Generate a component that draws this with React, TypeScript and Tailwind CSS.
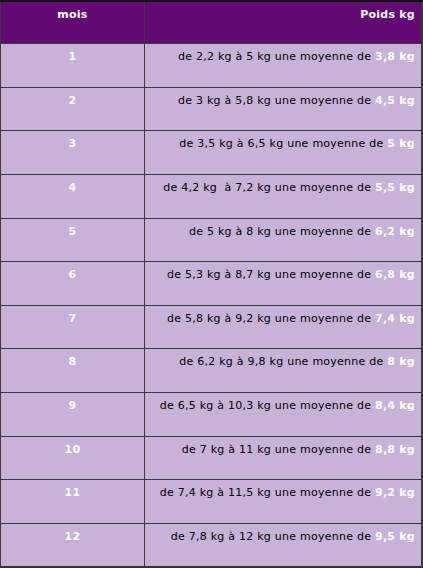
import React from "react";

const rows: { m: string; text: string; avg: string; h: string }[] = [
  { m: "1", text: "de 2,2 kg à 5 kg une moyenne de ", avg: "3,8 kg", h: "h-[44px]" },
  { m: "2", text: "de 3 kg à 5,8 kg une moyenne de ", avg: "4,5 kg", h: "h-[43px]" },
  { m: "3", text: "de 3,5 kg à 6,5 kg une moyenne de ", avg: "5 kg", h: "h-[44px]" },
  { m: "4", text: "de 4,2 kg \u00a0à 7,2 kg une moyenne de ", avg: "5,5 kg", h: "h-[44px]" },
  { m: "5", text: "de 5 kg à 8 kg une moyenne de ", avg: "6,2 kg", h: "h-[43px]" },
  { m: "6", text: "de 5,3 kg à 8,7 kg une moyenne de ", avg: "6,8 kg", h: "h-[44px]" },
  { m: "7", text: "de 5,8 kg à 9,2 kg une moyenne de ", avg: "7,4 kg", h: "h-[43px]" },
  { m: "8", text: "de 6,2 kg à 9,8 kg une moyenne de ", avg: "8 kg", h: "h-[44px]" },
  { m: "9", text: "de 6,5 kg à 10,3 kg une moyenne de ", avg: "8,4 kg", h: "h-[44px]" },
  { m: "10", text: "de 7 kg à 11 kg une moyenne de ", avg: "8,8 kg", h: "h-[43px]" },
  { m: "11", text: "de 7,4 kg à 11,5 kg une moyenne de ", avg: "9,2 kg", h: "h-[44px]" },
  { m: "12", text: "de 7,8 kg à 12 kg une moyenne de ", avg: "9,5 kg", h: "h-[43px]" },
];

export default function App() {
  return (
    <div
      className="w-[423px] h-[568px] bg-white text-[11px] leading-[13px] tracking-[0.25px]"
      style={{ fontFamily: '"DejaVu Sans", Verdana, sans-serif' }}
    >
      <div className="flex flex-col border-t-2 border-t-[#111111] border-b-2 border-b-[#333333]">
        <div className="flex h-[41px] bg-[#610872] text-white font-bold">
          <div className="w-[145px] shrink-0 border-l border-r border-[#3a3a3a] text-center pt-[6px]">
            mois
          </div>
          <div className="flex-1 border-r-2 border-[#3a3a3a] text-right pt-[6px] pr-[6px]">
            Poids kg
          </div>
        </div>
        {rows.map((r) => (
          <div
            key={r.m}
            className={`flex ${r.h} bg-[#c8b2d8] border-t border-[#3a3a3a]`}
          >
            <div className="w-[145px] shrink-0 border-l border-r border-[#3a3a3a] text-center pt-[6px] text-white font-bold">
              {r.m}
            </div>
            <div className="flex-1 border-r-2 border-[#3a3a3a] text-right pt-[6px] pr-[6px] text-black whitespace-pre">
              {r.text}
              <span className="text-white font-bold">{r.avg}</span>
            </div>
          </div>
        ))}
      </div>
    </div>
  );
}
